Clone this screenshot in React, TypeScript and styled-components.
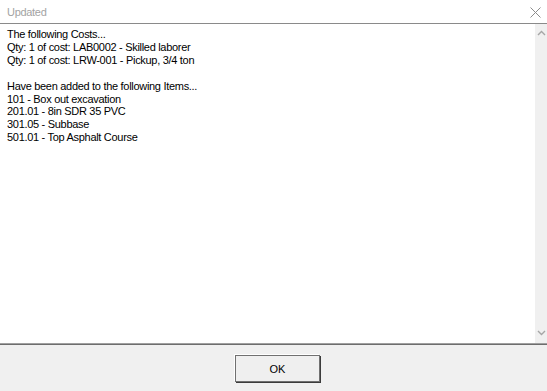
import styled, { createGlobalStyle } from "styled-components";

const GlobalStyle = createGlobalStyle`
  html, body {
    margin: 0;
    padding: 0;
    background: #ffffff;
  }
  #root {
    width: 547px;
    height: 391px;
  }
`;

const Dialog = styled.div`
  width: 547px;
  height: 391px;
  display: flex;
  flex-direction: column;
  background: #ffffff;
  font-family: "Liberation Sans", Arial, sans-serif;
  overflow: hidden;
`;

const TitleBar = styled.div`
  height: 22px;
  display: flex;
  align-items: center;
  justify-content: space-between;
  padding: 1px 6px 0 7px;
  border-bottom: 1px solid #8a8a8a;
`;

const Title = styled.span`
  font-size: 11px;
  letter-spacing: -0.3px;
  color: #a3a3a3;
`;

const CloseButton = styled.button`
  width: 11px;
  height: 11px;
  padding: 0;
  border: none;
  background: transparent;
  display: flex;
  align-items: center;
  justify-content: center;
`;

const Body = styled.div`
  flex: 1;
  display: flex;
  min-height: 0;
  border-bottom: 1px solid #a0a0a0;
  box-shadow: 0 1px 0 #6d6d6d;
`;

const TextArea = styled.div`
  flex: 1;
  padding: 4px 7px;
  font-size: 11px;
  line-height: 12.9px;
  letter-spacing: -0.3px;
  color: #000000;
  white-space: pre;
`;

const Scrollbar = styled.div`
  width: 12px;
  background: #f0f0f0;
  display: flex;
  flex-direction: column;
  justify-content: space-between;
  align-items: center;
  padding: 6px 0 7px;
`;

const Footer = styled.div`
  height: 45px;
  margin-top: 1px;
  background: #f0f0f0;
  display: flex;
  align-items: center;
  justify-content: center;
  padding-top: 1px;
`;

const OkButton = styled.button`
  width: 85px;
  height: 27px;
  margin-left: 8px;
  background: #efefef;
  border: 1px solid #707070;
  box-shadow: 1px 1px 0 #3c3c3c, -1px -1px 0 #ffffff;
  font-family: "Liberation Sans", Arial, sans-serif;
  font-size: 11px;
  color: #000000;
`;

const Chevron = ({ up }: { up?: boolean }) => (
  <svg width="9" height="6" viewBox="0 0 9 6">
    <path
      d={up ? "M1 5 L4.5 1.5 L8 5" : "M1 1 L4.5 4.5 L8 1"}
      fill="none"
      stroke="#a6a6a6"
      strokeWidth="1.4"
    />
  </svg>
);

const lines = [
  "The following Costs...",
  "Qty: 1 of cost: LAB0002 - Skilled laborer",
  "Qty: 1 of cost: LRW-001 - Pickup, 3/4 ton",
  "",
  "Have been added to the following Items...",
  "101 - Box out excavation",
  "201.01 - 8in SDR 35 PVC",
  "301.05 - Subbase",
  "501.01 - Top Asphalt Course",
];

const App = () => {
  return (
    <Dialog>
      <GlobalStyle />
      <TitleBar>
        <Title>Updated</Title>
        <CloseButton>
          <svg width="11" height="11" viewBox="0 0 11 11">
            <path d="M0.5 0.5 L10.5 10.5 M10.5 0.5 L0.5 10.5" stroke="#8c8c8c" strokeWidth="1" />
          </svg>
        </CloseButton>
      </TitleBar>
      <Body>
        <TextArea>{lines.join("\n")}</TextArea>
        <Scrollbar>
          <Chevron up />
          <Chevron />
        </Scrollbar>
      </Body>
      <Footer>
        <OkButton>OK</OkButton>
      </Footer>
    </Dialog>
  );
};

export default App;
